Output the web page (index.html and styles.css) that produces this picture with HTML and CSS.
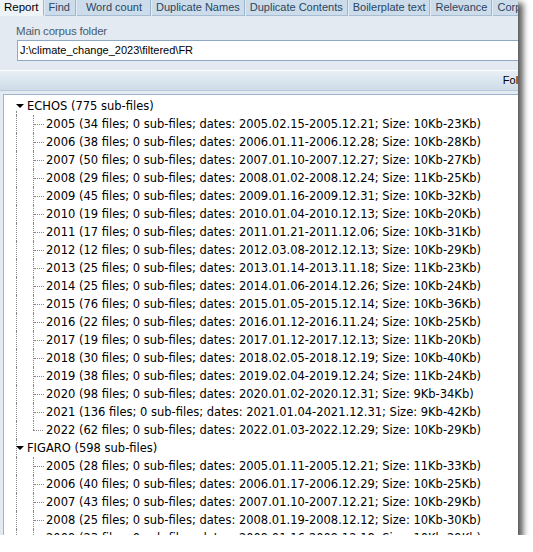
FILE: index.html
```html
<!DOCTYPE html>
<html>
<head>
<meta charset="utf-8">
<link rel="stylesheet" href="styles.css">
</head>
<body>
<div class="window">
  <div class="tabs">
    <div class="tab active">Report</div>
    <div class="tab find">Find</div>
    <div class="tab wide">Word count</div>
    <div class="tab">Duplicate Names</div>
    <div class="tab">Duplicate Contents</div>
    <div class="tab">Boilerplate text</div>
    <div class="tab">Relevance</div>
    <div class="tab">Corpus</div>
  </div>
  <div class="panel">
    <div class="label">Main corpus folder</div>
    <div class="input">J:\climate_change_2023\filtered\FR</div>
  </div>
  <div class="header"><span class="hcol">Folder</span></div>
  <div class="tree">
    <div class="row root first"><span class="pad"></span><span class="exp"><span class="tri"></span></span><span class="txt">ECHOS (775 sub-files)</span></div>
    <div class="row child"><span class="pad"></span><span class="g1"></span><span class="br"></span><span class="txt">2005 (34 files; 0 sub-files; dates: 2005.02.15-2005.12.21; Size: 10Kb-23Kb)</span></div>
    <div class="row child"><span class="pad"></span><span class="g1"></span><span class="br"></span><span class="txt">2006 (38 files; 0 sub-files; dates: 2006.01.11-2006.12.28; Size: 10Kb-28Kb)</span></div>
    <div class="row child"><span class="pad"></span><span class="g1"></span><span class="br"></span><span class="txt">2007 (50 files; 0 sub-files; dates: 2007.01.10-2007.12.27; Size: 10Kb-27Kb)</span></div>
    <div class="row child"><span class="pad"></span><span class="g1"></span><span class="br"></span><span class="txt">2008 (29 files; 0 sub-files; dates: 2008.01.02-2008.12.24; Size: 11Kb-25Kb)</span></div>
    <div class="row child"><span class="pad"></span><span class="g1"></span><span class="br"></span><span class="txt">2009 (45 files; 0 sub-files; dates: 2009.01.16-2009.12.31; Size: 10Kb-32Kb)</span></div>
    <div class="row child"><span class="pad"></span><span class="g1"></span><span class="br"></span><span class="txt">2010 (19 files; 0 sub-files; dates: 2010.01.04-2010.12.13; Size: 10Kb-20Kb)</span></div>
    <div class="row child"><span class="pad"></span><span class="g1"></span><span class="br"></span><span class="txt">2011 (17 files; 0 sub-files; dates: 2011.01.21-2011.12.06; Size: 10Kb-31Kb)</span></div>
    <div class="row child"><span class="pad"></span><span class="g1"></span><span class="br"></span><span class="txt">2012 (12 files; 0 sub-files; dates: 2012.03.08-2012.12.13; Size: 10Kb-29Kb)</span></div>
    <div class="row child"><span class="pad"></span><span class="g1"></span><span class="br"></span><span class="txt">2013 (25 files; 0 sub-files; dates: 2013.01.14-2013.11.18; Size: 11Kb-23Kb)</span></div>
    <div class="row child"><span class="pad"></span><span class="g1"></span><span class="br"></span><span class="txt">2014 (25 files; 0 sub-files; dates: 2014.01.06-2014.12.26; Size: 10Kb-24Kb)</span></div>
    <div class="row child"><span class="pad"></span><span class="g1"></span><span class="br"></span><span class="txt">2015 (76 files; 0 sub-files; dates: 2015.01.05-2015.12.14; Size: 10Kb-36Kb)</span></div>
    <div class="row child"><span class="pad"></span><span class="g1"></span><span class="br"></span><span class="txt">2016 (22 files; 0 sub-files; dates: 2016.01.12-2016.11.24; Size: 10Kb-25Kb)</span></div>
    <div class="row child"><span class="pad"></span><span class="g1"></span><span class="br"></span><span class="txt">2017 (19 files; 0 sub-files; dates: 2017.01.12-2017.12.13; Size: 11Kb-20Kb)</span></div>
    <div class="row child"><span class="pad"></span><span class="g1"></span><span class="br"></span><span class="txt">2018 (30 files; 0 sub-files; dates: 2018.02.05-2018.12.19; Size: 10Kb-40Kb)</span></div>
    <div class="row child"><span class="pad"></span><span class="g1"></span><span class="br"></span><span class="txt">2019 (38 files; 0 sub-files; dates: 2019.02.04-2019.12.24; Size: 11Kb-24Kb)</span></div>
    <div class="row child"><span class="pad"></span><span class="g1"></span><span class="br"></span><span class="txt">2020 (98 files; 0 sub-files; dates: 2020.01.02-2020.12.31; Size: 9Kb-34Kb)</span></div>
    <div class="row child"><span class="pad"></span><span class="g1"></span><span class="br"></span><span class="txt">2021 (136 files; 0 sub-files; dates: 2021.01.04-2021.12.31; Size: 9Kb-42Kb)</span></div>
    <div class="row child last"><span class="pad"></span><span class="g1"></span><span class="br"></span><span class="txt">2022 (62 files; 0 sub-files; dates: 2022.01.03-2022.12.29; Size: 10Kb-29Kb)</span></div>
    <div class="row root"><span class="pad"></span><span class="exp"><span class="tri"></span></span><span class="txt">FIGARO (598 sub-files)</span></div>
    <div class="row child"><span class="pad"></span><span class="g1"></span><span class="br"></span><span class="txt">2005 (28 files; 0 sub-files; dates: 2005.01.11-2005.12.21; Size: 11Kb-33Kb)</span></div>
    <div class="row child"><span class="pad"></span><span class="g1"></span><span class="br"></span><span class="txt">2006 (40 files; 0 sub-files; dates: 2006.01.17-2006.12.29; Size: 10Kb-25Kb)</span></div>
    <div class="row child"><span class="pad"></span><span class="g1"></span><span class="br"></span><span class="txt">2007 (43 files; 0 sub-files; dates: 2007.01.10-2007.12.21; Size: 10Kb-29Kb)</span></div>
    <div class="row child"><span class="pad"></span><span class="g1"></span><span class="br"></span><span class="txt">2008 (25 files; 0 sub-files; dates: 2008.01.19-2008.12.12; Size: 10Kb-30Kb)</span></div>
    <div class="row child"><span class="pad"></span><span class="g1"></span><span class="br"></span><span class="txt">2009 (23 files; 0 sub-files; dates: 2009.01.16-2009.12.18; Size: 10Kb-29Kb)</span></div>
  </div>
</div>
</body>
</html>
```

FILE: styles.css
```css
html, body {
  margin: 0;
  padding: 0;
  background: #ffffff;
}
body {
  font-family: "Liberation Sans", Arial, sans-serif;
  font-size: 11px;
  color: #000;
}
.window {
  width: 518px;
  height: 535px;
  overflow: hidden;
  background: #e3eaf1;
  box-shadow: 4px 4px 6px 1px rgba(0, 0, 0, 0.65);
  display: flex;
  flex-direction: column;
}
.tabs {
  display: flex;
  height: 16px;
  background: #e3eaf1;
  flex: none;
  white-space: nowrap;
  font-size: 11px;
}
.tab {
  height: 15px;
  line-height: 15px;
  padding: 0 4px;
  background: #cddcea;
  color: #2a4560;
  border-right: 1px solid #9fb6cd;
  border-bottom: 1px solid #a8bdd2;
  margin-left: 1px;
}
.tab.find {
  padding: 0 5px 0 4px;
}
.tab.wide {
  padding: 0 8px 0 9px;
}
.tab.active {
  background: #eef3f7;
  color: #000;
  border-bottom: 1px solid #eef3f7;
  margin-left: 0;
  padding: 0 4px 0 4px;
  font-size: 11.5px;
}
.panel {
  flex: none;
  height: 54px;
  padding: 0 0 0 17px;
  box-sizing: border-box;
}
.label {
  color: #4a5c6e;
  padding: 7px 0 0 0;
  height: 17px;
  line-height: 17px;
  margin-left: -1px;
  font-size: 11.5px;
  letter-spacing: -0.2px;
}
.input {
  height: 19px;
  line-height: 19px;
  background: #fff;
  border: 1px solid #8fa9c4;
  border-right: none;
  padding-left: 2px;
  color: #000;
}
.header {
  flex: none;
  height: 19px;
  border-top: 1px solid #fbfdfe;
  background: linear-gradient(#e8eff5, #cedce8);
  border-bottom: 1px solid #b7c9da;
  display: flex;
  justify-content: flex-end;
}
.hcol {
  line-height: 19px;
  margin-right: -16px;
  color: #000;
}
.tree {
  flex: 1;
  margin-top: 3px;
  margin-left: 3px;
  background: #fff;
  border-left: 1px solid #9db4cc;
  border-top: 1px solid #9db4cc;
  padding-top: 2px;
  font-family: "DejaVu Sans", Verdana, sans-serif;
  font-size: 11.5px;
}
.row {
  display: flex;
  height: 18px;
  line-height: 18px;
  white-space: nowrap;
}
.pad {
  width: 12px;
  flex: none;
}
.exp {
  width: 11px;
  flex: none;
  position: relative;
}
.tri {
  position: absolute;
  left: 0;
  top: 7px;
  width: 0;
  height: 0;
  border-left: 4px solid transparent;
  border-right: 4px solid transparent;
  border-top: 4px solid #000;
}
.root .exp::before {
  content: "";
  position: absolute;
  left: 0;
  top: 0;
  bottom: 0;
  border-left: 1px dotted #888;
}
.root.first .exp::before {
  top: 14px;
}
.txt {
  padding-left: 2px;
}
.root .txt {
  padding-left: 0;
}
.g1 {
  width: 17px;
  flex: none;
  box-sizing: border-box;
  border-left: 1px dotted #888;
}
.br {
  width: 11px;
  flex: none;
  box-sizing: border-box;
  position: relative;
  border-left: 1px dotted #888;
}
.br::after {
  content: "";
  position: absolute;
  left: 0;
  width: 10px;
  top: 9px;
  border-top: 1px dotted #888;
}
.last .br {
  border-left: none;
}
.last .br::before {
  content: "";
  position: absolute;
  left: 0;
  top: 0;
  height: 9px;
  border-left: 1px dotted #888;
}
```
